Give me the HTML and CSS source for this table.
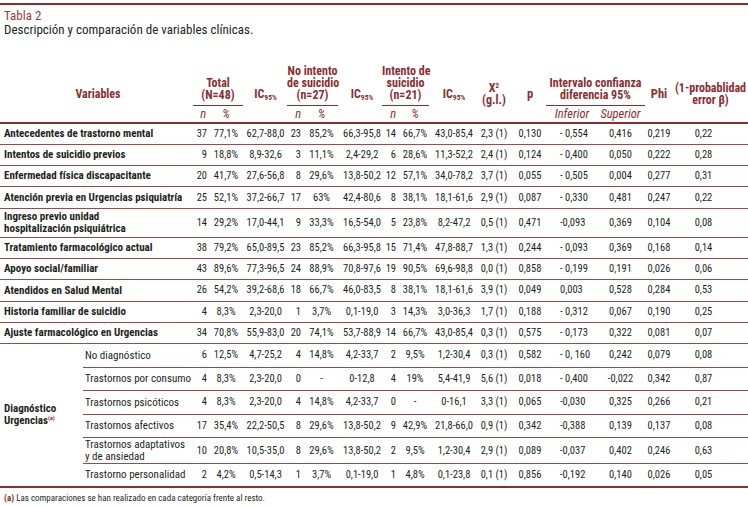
FILE: index.html
```html
<!DOCTYPE html>
<html lang="es">
<head>
<meta charset="utf-8">
<title>Tabla 2</title>
<link rel="stylesheet" href="styles.css">
</head>
<body>
<div class="page">
  <div class="rule"></div>
  <div class="caption">Tabla 2</div>
  <div class="subtitle">Descripción y comparación de variables clínicas.</div>
  <table class="tbl">
    <colgroup>
      <col class="c1"><col class="c2"><col class="c3"><col class="c4"><col class="c5"><col class="c6"><col class="c7"><col class="c8"><col class="c9"><col class="c10"><col class="c11"><col class="c12"><col class="c13"><col class="c14"><col class="c15"><col class="c16"><col class="c17">
    </colgroup>
    <thead>
      <tr class="h1">
        <th rowspan="2" colspan="2" class="hvar">Variables</th>
        <th colspan="2" class="grp"><div class="gl gl-t">Total<br>(N=48)</div></th>
        <th rowspan="2" class="hic">IC<sub>95%</sub></th>
        <th colspan="2" class="grp"><div class="gl gl-ni">No intento<br>de suicidio<br>(n=27)</div></th>
        <th rowspan="2" class="hic">IC<sub>95%</sub></th>
        <th colspan="2" class="grp"><div class="gl gl-i">Intento de<br>suicidio<br>(n=21)</div></th>
        <th rowspan="2" class="hic">IC<sub>95%</sub></th>
        <th rowspan="2" class="hx">X<sup>2</sup><br>(g.l.)</th>
        <th rowspan="2" class="hp">p</th>
        <th colspan="2" class="grp"><div class="gl gl-ic">Intervalo confianza<br>diferencia 95%</div></th>
        <th rowspan="2" class="hphi">Phi</th>
        <th rowspan="2" class="hpr">(1-probablidad<br>error β)</th>
      </tr>
      <tr class="h2">
        <th class="sn">n</th><th class="sp">%</th>
        <th class="sn">n</th><th class="sp">%</th>
        <th class="sn">n</th><th class="sp">%</th>
        <th class="sinf">Inferior</th><th class="ssup">Superior</th>
      </tr>
    </thead>
    <tbody>
      <tr class="r"><td colspan="2" class="lab">Antecedentes de trastorno mental</td><td class="n">37</td><td class="pc">77,1%</td><td class="ic">62,7-88,0</td><td class="n n2">23</td><td class="pc">85,2%</td><td class="ic">66,3-95,8</td><td class="n n2">14</td><td class="pc">66,7%</td><td class="ic">43,0-85,4</td><td class="x">2,3 (1)</td><td class="p">0,130</td><td class="inf">- 0,554</td><td class="sup">0,416</td><td class="phi">0,219</td><td class="pr">0,22</td></tr>
      <tr class="r"><td colspan="2" class="lab">Intentos de suicidio previos</td><td class="n">9</td><td class="pc">18,8%</td><td class="ic">8,9-32,6</td><td class="n n2">3</td><td class="pc">11,1%</td><td class="ic">2,4-29,2</td><td class="n n2">6</td><td class="pc">28,6%</td><td class="ic">11,3-52,2</td><td class="x">2,4 (1)</td><td class="p">0,124</td><td class="inf">- 0,400</td><td class="sup">0,050</td><td class="phi">0,222</td><td class="pr">0,28</td></tr>
      <tr class="r"><td colspan="2" class="lab">Enfermedad física discapacitante</td><td class="n">20</td><td class="pc">41,7%</td><td class="ic">27,6-56,8</td><td class="n n2">8</td><td class="pc">29,6%</td><td class="ic">13,8-50,2</td><td class="n n2">12</td><td class="pc">57,1%</td><td class="ic">34,0-78,2</td><td class="x">3,7 (1)</td><td class="p">0,055</td><td class="inf">- 0,505</td><td class="sup">0,004</td><td class="phi">0,277</td><td class="pr">0,31</td></tr>
      <tr class="r"><td colspan="2" class="lab">Atención previa en Urgencias psiquiatría</td><td class="n">25</td><td class="pc">52,1%</td><td class="ic">37,2-66,7</td><td class="n n2">17</td><td class="pc">63%</td><td class="ic">42,4-80,6</td><td class="n n2">8</td><td class="pc">38,1%</td><td class="ic">18,1-61,6</td><td class="x">2,9 (1)</td><td class="p">0,087</td><td class="inf">- 0,330</td><td class="sup">0,481</td><td class="phi">0,247</td><td class="pr">0,22</td></tr>
      <tr class="r2"><td colspan="2" class="lab">Ingreso previo unidad<br>hospitalización psiquiátrica</td><td class="n">14</td><td class="pc">29,2%</td><td class="ic">17,0-44,1</td><td class="n n2">9</td><td class="pc">33,3%</td><td class="ic">16,5-54,0</td><td class="n n2">5</td><td class="pc">23,8%</td><td class="ic">8,2-47,2</td><td class="x">0,5 (1)</td><td class="p">0,471</td><td class="inf">-0,093</td><td class="sup">0,369</td><td class="phi">0,104</td><td class="pr">0,08</td></tr>
      <tr class="r"><td colspan="2" class="lab">Tratamiento farmacológico actual</td><td class="n">38</td><td class="pc">79,2%</td><td class="ic">65,0-89,5</td><td class="n n2">23</td><td class="pc">85,2%</td><td class="ic">66,3-95,8</td><td class="n n2">15</td><td class="pc">71,4%</td><td class="ic">47,8-88,7</td><td class="x">1,3 (1)</td><td class="p">0,244</td><td class="inf">- 0,093</td><td class="sup">0,369</td><td class="phi">0,168</td><td class="pr">0,14</td></tr>
      <tr class="r"><td colspan="2" class="lab">Apoyo social/familiar</td><td class="n">43</td><td class="pc">89,6%</td><td class="ic">77,3-96,5</td><td class="n n2">24</td><td class="pc">88,9%</td><td class="ic">70,8-97,6</td><td class="n n2">19</td><td class="pc">90,5%</td><td class="ic">69,6-98,8</td><td class="x">0,0 (1)</td><td class="p">0,858</td><td class="inf">- 0,199</td><td class="sup">0,191</td><td class="phi">0,026</td><td class="pr">0,06</td></tr>
      <tr class="r"><td colspan="2" class="lab">Atendidos en Salud Mental</td><td class="n">26</td><td class="pc">54,2%</td><td class="ic">39,2-68,6</td><td class="n n2">18</td><td class="pc">66,7%</td><td class="ic">46,0-83,5</td><td class="n n2">8</td><td class="pc">38,1%</td><td class="ic">18,1-61,6</td><td class="x">3,9 (1)</td><td class="p">0,049</td><td class="inf">0,003</td><td class="sup">0,528</td><td class="phi">0,284</td><td class="pr">0,53</td></tr>
      <tr class="r"><td colspan="2" class="lab">Historia familiar de suicidio</td><td class="n">4</td><td class="pc">8,3%</td><td class="ic">2,3-20,0</td><td class="n n2">1</td><td class="pc">3,7%</td><td class="ic">0,1-19,0</td><td class="n n2">3</td><td class="pc">14,3%</td><td class="ic">3,0-36,3</td><td class="x">1,7 (1)</td><td class="p">0,188</td><td class="inf">- 0,312</td><td class="sup">0,067</td><td class="phi">0,190</td><td class="pr">0,25</td></tr>
      <tr class="r"><td colspan="2" class="lab">Ajuste farmacológico en Urgencias</td><td class="n">34</td><td class="pc">70,8%</td><td class="ic">55,9-83,0</td><td class="n n2">20</td><td class="pc">74,1%</td><td class="ic">53,7-88,9</td><td class="n n2">14</td><td class="pc">66,7%</td><td class="ic">43,0-85,4</td><td class="x">0,3 (1)</td><td class="p">0,575</td><td class="inf">- 0,173</td><td class="sup">0,322</td><td class="phi">0,081</td><td class="pr">0,07</td></tr>
      <tr class="s"><td rowspan="6" class="diag">Diagnóstico<br>Urgencias<sup>(a)</sup></td><td class="sub">No diagnóstico</td><td class="n">6</td><td class="pc">12,5%</td><td class="ic">4,7-25,2</td><td class="n n2">4</td><td class="pc">14,8%</td><td class="ic">4,2-33,7</td><td class="n n2">2</td><td class="pc">9,5%</td><td class="ic">1,2-30,4</td><td class="x">0,3 (1)</td><td class="p">0,582</td><td class="inf">- 0, 160</td><td class="sup">0,242</td><td class="phi">0,079</td><td class="pr">0,08</td></tr>
      <tr class="s"><td class="sub">Trastornos por consumo</td><td class="n">4</td><td class="pc">8,3%</td><td class="ic">2,3-20,0</td><td class="n n2">0</td><td class="pc">-</td><td class="ic">0-12,8</td><td class="n n2">4</td><td class="pc">19%</td><td class="ic">5,4-41,9</td><td class="x">5,6 (1)</td><td class="p">0,018</td><td class="inf">- 0,400</td><td class="sup">-0,022</td><td class="phi">0,342</td><td class="pr">0,87</td></tr>
      <tr class="s"><td class="sub">Trastornos psicóticos</td><td class="n">4</td><td class="pc">8,3%</td><td class="ic">2,3-20,0</td><td class="n n2">4</td><td class="pc">14,8%</td><td class="ic">4,2-33,7</td><td class="n n2">0</td><td class="pc">-</td><td class="ic">0-16,1</td><td class="x">3,3 (1)</td><td class="p">0,065</td><td class="inf">-0,030</td><td class="sup">0,325</td><td class="phi">0,266</td><td class="pr">0,21</td></tr>
      <tr class="s"><td class="sub">Trastornos afectivos</td><td class="n">17</td><td class="pc">35,4%</td><td class="ic">22,2-50,5</td><td class="n n2">8</td><td class="pc">29,6%</td><td class="ic">13,8-50,2</td><td class="n n2">9</td><td class="pc">42,9%</td><td class="ic">21,8-66,0</td><td class="x">0,9 (1)</td><td class="p">0,342</td><td class="inf">-0,388</td><td class="sup">0,139</td><td class="phi">0,137</td><td class="pr">0,08</td></tr>
      <tr class="s2"><td class="sub">Trastornos adaptativos<br>y de ansiedad</td><td class="n">10</td><td class="pc">20,8%</td><td class="ic">10,5-35,0</td><td class="n n2">8</td><td class="pc">29,6%</td><td class="ic">13,8-50,2</td><td class="n n2">2</td><td class="pc">9,5%</td><td class="ic">1,2-30,4</td><td class="x">2,9 (1)</td><td class="p">0,089</td><td class="inf">-0,037</td><td class="sup">0,402</td><td class="phi">0,246</td><td class="pr">0,63</td></tr>
      <tr class="s last"><td class="sub">Trastorno personalidad</td><td class="n">2</td><td class="pc">4,2%</td><td class="ic">0,5-14,3</td><td class="n n2">1</td><td class="pc">3,7%</td><td class="ic">0,1-19,0</td><td class="n n2">1</td><td class="pc">4,8%</td><td class="ic">0,1-23,8</td><td class="x">0,1 (1)</td><td class="p">0,856</td><td class="inf">-0,192</td><td class="sup">0,140</td><td class="phi">0,026</td><td class="pr">0,05</td></tr>
    </tbody>
  </table>
  <div class="foot"><b>(a)</b> Las comparaciones se han realizado en cada categoría frente al resto.</div>
</div>
</body>
</html>
```

FILE: styles.css
```css
html, body {
  margin: 0;
  padding: 0;
  background: #ffffff;
}

.page {
  width: 748px;
  font-family: "Roboto Condensed", "Roboto", sans-serif;
  font-stretch: 80%;
  color: #231f20;
}

.rule {
  margin-top: 3px;
  height: 2px;
  background: #8a2e30;
}

.caption {
  margin-top: 4px;
  padding-left: 4px;
  font-size: 13px;
  line-height: 14px;
  color: #9b3a40;
}

.subtitle {
  padding-left: 4px;
  font-size: 13px;
  line-height: 14px;
  color: #231f20;
}

.tbl {
  margin-top: 25px;
  width: 748px;
  table-layout: fixed;
  border-collapse: collapse;
  border-spacing: 0;
}

.c1 { width: 83px; }
.c2 { width: 105px; }
.c3 { width: 20px; }
.c4 { width: 36px; }
.c5 { width: 43px; }
.c6 { width: 16px; }
.c7 { width: 37px; }
.c8 { width: 44px; }
.c9 { width: 14px; }
.c10 { width: 34px; }
.c11 { width: 44px; }
.c12 { width: 36px; }
.c13 { width: 36px; }
.c14 { width: 48px; }
.c15 { width: 49px; }
.c16 { width: 28px; }
.c17 { width: 75px; }

th {
  padding: 0;
  color: #8a2e30;
  font-weight: bold;
  font-size: 12px;
  line-height: 12px;
  text-align: center;
  vertical-align: middle;
  white-space: nowrap;
}

.h1 { height: 44px; }
.h2 { height: 17px; }

.h2 th {
  font-weight: normal;
  font-style: italic;
  font-size: 12.5px;
  border-bottom: 2px solid #8a2e30;
  vertical-align: middle;
}

.hvar {
  padding-left: 8px;
  padding-top: 4px;
  font-size: 12px;
  border-bottom: 2px solid #8a2e30;
}

.hic, .hx, .hp, .hphi, .hpr {
  padding-top: 4px;
  border-bottom: 2px solid #8a2e30;
}

.hic sub {
  font-size: 7.5px;
  vertical-align: -2px;
  line-height: 0;
}

.hx sup {
  font-size: 7px;
  vertical-align: 4px;
  line-height: 0;
}

.hp { font-size: 12.5px; }
.hphi { font-size: 12.5px; }

.grp {
  vertical-align: bottom;
}

.gl {
  border-bottom: 1px solid #8a2e30;
  padding-bottom: 4px;
}

.gl-t { margin: 0 1px 0 5px; }
.gl-ni { margin: 0 2px 0 0; }
.gl-i { margin: 0 3px 0 -2px; }
.gl-ic { margin: 0 0 0 -2px; }

.sn { text-align: right; padding-right: 2px; }
.sp { text-align: center; }
.sinf { text-align: center; }
.ssup { text-align: center; }

td {
  padding: 0;
  font-size: 10.5px;
  line-height: 12px;
  white-space: nowrap;
  vertical-align: middle;
  text-align: center;
  border-bottom: 1px solid #9c4a48;
}

.r { height: 21.3px; }
.r2 { height: 29px; }
.s { height: 23.5px; }
.s2 { height: 26px; }

.lab {
  padding-left: 4px;
  text-align: left;
  font-size: 11px;
  line-height: 11.5px;
  font-weight: bold;
  color: #231f20;
}

.sub {
  padding-left: 2px;
  text-align: left;
  font-size: 11px;
  line-height: 11.5px;
}

.diag {
  padding-left: 4px;
  text-align: left;
  font-size: 11px;
  line-height: 12px;
  font-weight: bold;
  border-bottom: 2px solid #8a2e30;
}

.diag sup {
  font-size: 6px;
  color: #8a2e30;
  vertical-align: 4px;
  line-height: 0;
}

.n { text-align: right; padding-right: 1px; }
.n2 { padding-right: 2px; }
.pc { text-align: center; }
.ic { text-align: center; }
.x { text-align: center; }
.p { text-align: center; }
.inf { text-align: left; padding-left: 12px; }
.sup { text-align: center; }
.phi { text-align: center; }
.pr { text-align: center; padding-right: 14px; }

.last td {
  border-bottom: 2px solid #8a2e30;
}

.foot {
  margin-top: 5px;
  padding-left: 4px;
  font-size: 9px;
  line-height: 11px;
  color: #231f20;
}

.foot b {
  color: #8a2e30;
}
```
